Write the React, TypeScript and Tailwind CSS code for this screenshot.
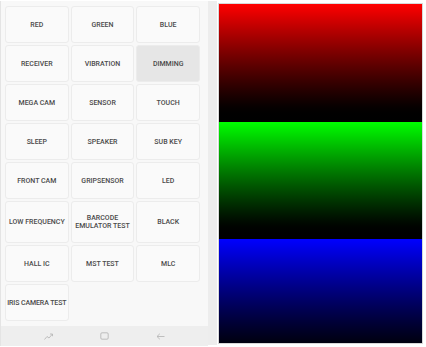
const items = [
  "RED", "GREEN", "BLUE",
  "RECEIVER", "VIBRATION", "DIMMING",
  "MEGA CAM", "SENSOR", "TOUCH",
  "SLEEP", "SPEAKER", "SUB KEY",
  "FRONT CAM", "GRIPSENSOR", "LED",
  "LOW FREQUENCY", "BARCODE EMULATOR TEST", "BLACK",
  "HALL IC", "MST TEST", "MLC",
  "IRIS CAMERA TEST",
];

export default function App() {
  return (
    <div className="w-[426px] h-[347px] bg-white flex font-['Roboto',sans-serif]">
      {/* LEFT — test menu */}
      <div className="w-[208px] h-[345px] mt-[1px] flex flex-col bg-[#f8f8f8] border-l border-[#e4e4e4]">
        <div className="flex-1 pl-[4px] pr-[8px] pt-[5px] grid grid-cols-3 gap-x-[2px] gap-y-[2px] grid-rows-[37px_37px_37px_37px_37px_42px_37px_37px]">
          {items.map((t) => (
            <div
              key={t}
              className={`flex items-center justify-center text-center rounded-[3px] border border-[#ececec] text-[7px] leading-[8px] font-medium text-[#4a4a4a] ${
                t === "DIMMING" ? "bg-[#e6e6e6]" : "bg-[#fafafa]"
              } ${t === "IRIS CAMERA TEST" ? "whitespace-nowrap tracking-[-0.1px]" : "px-[2px]"}`}
            >
              {t}
            </div>
          ))}
        </div>
        {/* nav bar */}
        <div className="h-[20px] mt-[3px] bg-[#eeeeee] flex items-center justify-around px-[20px]">
          <svg width="9" height="7" viewBox="0 0 9 7" fill="none" stroke="#b8b8b8" strokeWidth="0.9">
            <path d="M0.5 6.5 L3 3.5 L5 5 L8.5 1" />
            <path d="M6 1 H8.5 V3.2" />
          </svg>
          <svg width="9" height="8" viewBox="0 0 9 8" fill="none" stroke="#b8b8b8" strokeWidth="0.9">
            <rect x="0.8" y="0.8" width="7.4" height="6.4" rx="1.2" />
          </svg>
          <svg width="9" height="7" viewBox="0 0 9 7" fill="none" stroke="#b8b8b8" strokeWidth="0.9">
            <path d="M8.5 3.5 H1 M3.8 0.8 L1 3.5 L3.8 6.2" />
          </svg>
        </div>
      </div>

      {/* divider strip */}
      <div className="w-[9px] h-[344px] mt-[1px] bg-[#ededed]" />

      {/* RIGHT — colour gradients */}
      <div className="w-[205px] h-[341px] mt-[3px] ml-[1px] flex flex-col border border-[#d8d8d8]">
        <div className="h-[118px] bg-gradient-to-b from-[#ff0000] to-[#000000]" />
        <div className="h-[117px] bg-gradient-to-b from-[#00ff00] to-[#000000]" />
        <div className="flex-1 bg-gradient-to-b from-[#0000ff] to-[#000010]" />
      </div>
    </div>
  );
}
